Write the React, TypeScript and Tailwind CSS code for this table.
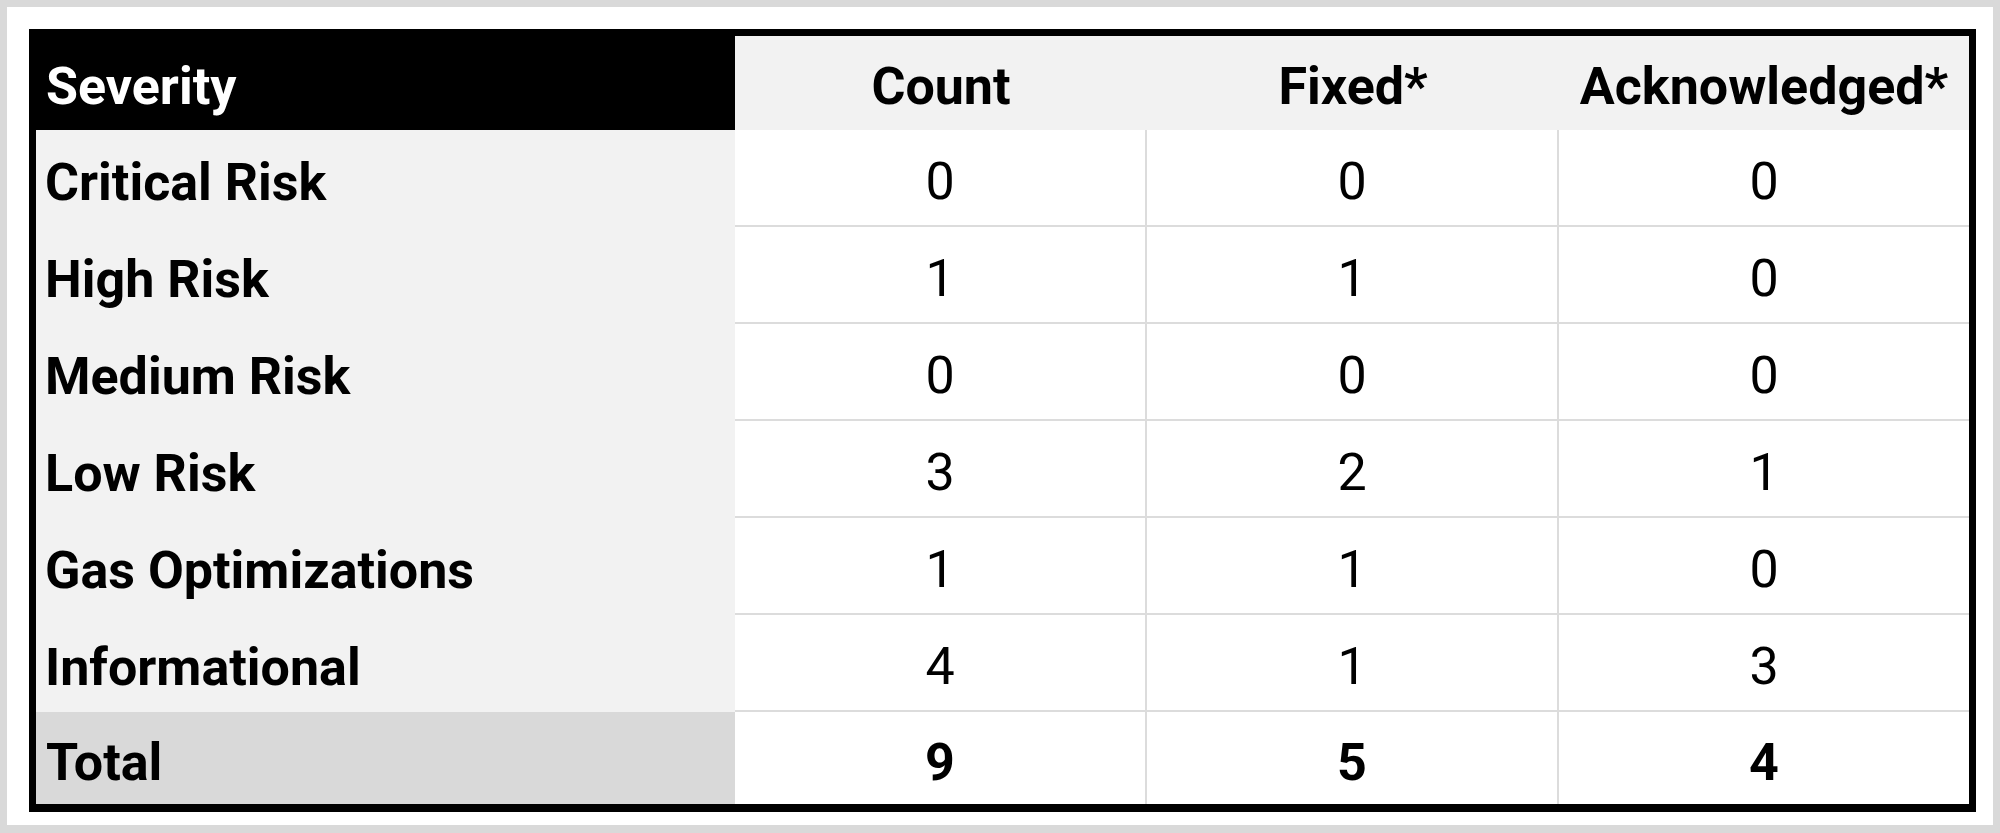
import React from "react";

const rows: [string, string, string, string][] = [
  ["Critical Risk", "0", "0", "0"],
  ["High Risk", "1", "1", "0"],
  ["Medium Risk", "0", "0", "0"],
  ["Low Risk", "3", "2", "1"],
  ["Gas Optimizations", "1", "1", "0"],
  ["Informational", "4", "1", "3"],
];

export default function App() {
  return (
    <div
      className="w-[2000px] h-[833px] bg-[#d9d9d9] p-[7px] pb-[8px]"
      style={{ fontFamily: "Roboto, 'Liberation Sans', sans-serif" }}
    >
      <div className="w-full h-full bg-white pl-[22px] pt-[22px] pr-[17px] pb-[13px]">
        <div className="w-full h-full border-[7px] border-b-[8px] border-black grid grid-cols-[699px_412px_412px_1fr] grid-rows-[94px_repeat(6,97px)_1fr] text-[52px] leading-none text-black">
          {/* header */}
          <div className="bg-black text-white font-bold flex items-center pl-[10px] pt-[8px]">Severity</div>
          <div className="bg-[#f2f2f2] font-bold flex items-center justify-center pt-[8px]">Count</div>
          <div className="bg-[#f2f2f2] font-bold flex items-center justify-center pt-[8px]">Fixed*</div>
          <div className="bg-[#f2f2f2] font-bold flex items-center justify-center pt-[8px]">Acknowledged*</div>
          {rows.map((r) => (
            <React.Fragment key={r[0]}>
              <div className="bg-[#f2f2f2] font-bold flex items-center pl-[9px] pt-[9px]">{r[0]}</div>
              <div className="bg-white border-b-2 border-r-2 border-[#dcdcdc] flex items-center justify-center pt-[9px]">{r[1]}</div>
              <div className="bg-white border-b-2 border-r-2 border-[#dcdcdc] flex items-center justify-center pt-[9px]">{r[2]}</div>
              <div className="bg-white border-b-2 border-[#dcdcdc] flex items-center justify-center pt-[9px]">{r[3]}</div>
            </React.Fragment>
          ))}
          <div className="bg-[#d9d9d9] font-bold flex items-center pl-[10px] pt-[10px]">Total</div>
          <div className="bg-white border-r-2 border-[#dcdcdc] font-bold flex items-center justify-center pt-[10px]">9</div>
          <div className="bg-white border-r-2 border-[#dcdcdc] font-bold flex items-center justify-center pt-[10px]">5</div>
          <div className="bg-white font-bold flex items-center justify-center pt-[10px]">4</div>
        </div>
      </div>
    </div>
  );
}
